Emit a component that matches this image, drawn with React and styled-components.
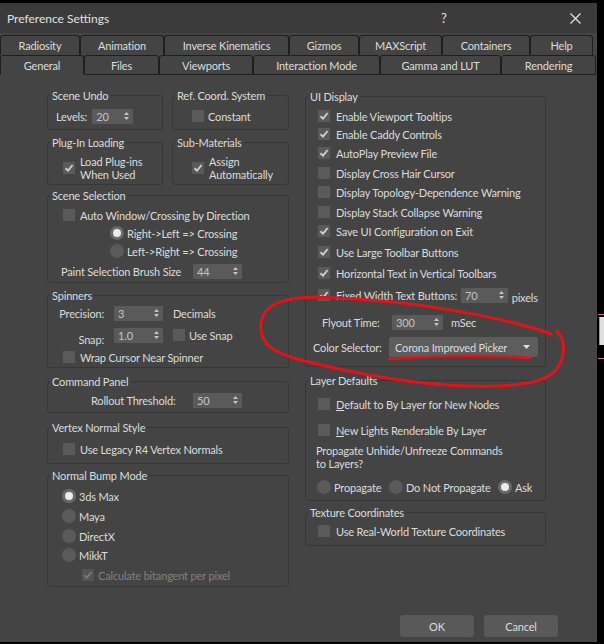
import React from 'react';
import styled, { createGlobalStyle } from 'styled-components';

const Global = createGlobalStyle`
  html, body { margin: 0; padding: 0; background: #000; }
  body {
    font-family: Lato, "Liberation Sans", "DejaVu Sans", sans-serif;
    font-size: 11px;
    letter-spacing: -0.17px;
    color: #dcdcdc;
  }
  * { box-sizing: border-box; }
`;

const Page = styled.div`
  position: relative;
  display: flex;
  width: 604px;
  height: 644px;
  padding-top: 3px;
  overflow: hidden;
  background: #000;
`;

const Dialog = styled.div`
  width: 597px;
  height: 639px;
  background: #444444;
  display: flex;
  flex-direction: column;
`;

const Side = styled.div`
  flex: 1;
  display: flex;
  flex-direction: column;
  padding-top: 311px;
`;
const SideLine = styled.div`
  height: 1px;
  margin-top: ${p => p.$mt}px;
  margin-left: 1px;
  background: #d070a0;
`;
const SideBlock = styled.div`
  height: 28px;
  margin-top: 2px;
  margin-left: 2px;
  background: #dedede;
  border-left: 1px solid #9a9a9a;
`;

const TitleBar = styled.div`
  height: 30px;
  background: #3b3b3b;
  display: flex;
  align-items: center;
  padding: 0 0 0 7px;
`;
const TitleText = styled.div`
  flex: 1;
  font-size: 12px;
  letter-spacing: 0;
  color: #e2e2e2;
`;
const Help = styled.div`
  width: 20px;
  font-size: 13px;
  color: #e2e2e2;
  margin-right: 96px;
`;
const CloseBtn = styled.div`
  width: 36px;
  height: 30px;
  display: flex;
  align-items: center;
  justify-content: center;
  margin-right: 4px;
`;

const Tabs = styled.div`
  padding-top: 2px;
  display: flex;
  flex-direction: column;
`;
const TabRow = styled.div`
  display: flex;
  height: 20px;
`;
const Tab = styled.div`
  width: ${p => p.$w}px;
  height: 20px;
  border: 1px solid #1e1e1e;
  border-bottom-color: ${p => (p.$active ? '#444' : p.$bottom ? '#1e1e1e' : 'transparent')};
  border-radius: 3px 3px 0 0;
  display: flex;
  align-items: center;
  justify-content: center;
  color: #dcdcdc;
  background: #444;
  white-space: nowrap;
`;

const Content = styled.div`
  display: flex;
  padding: 20px 0 0 47px;
  gap: 16px;
`;
const Column = styled.div`
  width: ${p => p.$w}px;
  display: flex;
  flex-direction: column;
`;
const Pair = styled.div`
  display: flex;
  gap: 9px;
`;

const Group = styled.div`
  width: ${p => (p.$w ? `${p.$w}px` : 'auto')};
  height: ${p => p.$h}px;
  margin-top: ${p => p.$mt || 0}px;
  border: 1px solid #363636;
  border-radius: 3px;
  display: flex;
  flex-direction: column;
`;
const Legend = styled.div`
  align-self: flex-start;
  margin: -7px 0 0 2px;
  padding: 0 2px;
  height: 14px;
  line-height: 14px;
  background: #444;
  white-space: nowrap;
  color: #dcdcdc;
`;

const Row = styled.div`
  display: flex;
  align-items: center;
  height: ${p => p.$h || 18}px;
  margin-top: ${p => p.$mt || 0}px;
  padding-left: ${p => p.$pl || 0}px;
  gap: ${p => (p.$gap === undefined ? 5 : p.$gap)}px;
  white-space: nowrap;
`;
const Label = styled.span`
  display: inline-block;
  width: ${p => (p.$w ? `${p.$w}px` : 'auto')};
  text-align: ${p => p.$align || 'left'};
  color: ${p => (p.$dim ? '#828282' : '#dcdcdc')};
  line-height: 13px;
  position: relative;
  top: ${p => p.$dy || 0}px;
  white-space: nowrap;
`;
const Lines = styled.div`
  line-height: 13px;
  color: #dcdcdc;
`;

const Box = styled.span`
  flex: none;
  width: 12px;
  height: 12px;
  background: ${p => (p.$dim ? '#545454' : '#5a5a5a')};
  display: inline-flex;
  align-items: center;
  justify-content: center;
`;

const RadioDot = styled.span`
  flex: none;
  width: 14px;
  height: 14px;
  border-radius: 50%;
  background: ${p => (p.$on ? '#6a6a6a' : '#5a5a5a')};
  display: inline-flex;
  align-items: center;
  justify-content: center;
  &::after {
    content: '';
    width: 8px;
    height: 8px;
    border-radius: 50%;
    background: ${p => (p.$on ? '#ececec' : 'transparent')};
  }
`;

const SpinBox = styled.span`
  flex: none;
  width: ${p => p.$w}px;
  height: 15px;
  background: #5a5a5a;
  display: inline-flex;
  align-items: center;
  justify-content: space-between;
  padding: 0 4px 0 4px;
  color: #c4c4c4;
`;

const Drop = styled.div`
  flex: none;
  width: 149px;
  height: 20px;
  background: #5d5d5d;
  border-radius: 2px;
  display: flex;
  align-items: center;
  justify-content: space-between;
  padding: 0 8px 0 6px;
  color: #dcdcdc;
`;

const Footer = styled.div`
  margin-top: auto;
  display: flex;
  justify-content: flex-end;
  gap: 10px;
  padding: 0 39px 5px 0;
`;
const Button = styled.div`
  width: 74px;
  height: 22px;
  background: #595959;
  border-radius: 3px;
  display: flex;
  align-items: center;
  justify-content: center;
  color: #dcdcdc;
`;

const Overlay = styled.svg`
  position: absolute;
  left: 0;
  top: 0;
  pointer-events: none;
`;

const Check = ({ on = false, dim = false }) => (
  <Box $dim={dim}>
    {on && (
      <svg width="10" height="10" viewBox="0 0 10 10">
        <path d="M1.5 5.2 L4 7.6 L8.6 2" fill="none" stroke={dim ? '#7a7a7a' : '#cfcfcf'} strokeWidth="1.9" />
      </svg>
    )}
  </Box>
);

const Arrows = () => (
  <svg width="5" height="8" viewBox="0 0 5 8">
    <path d="M2.5 0 L5 3 L0 3 Z M0 5 L5 5 L2.5 8 Z" fill="#c4c4c4" />
  </svg>
);

const Spinner = ({ w, value }) => (
  <SpinBox $w={w}>
    <span>{value}</span>
    <Arrows />
  </SpinBox>
);

const CheckRow = ({ on, children, mt, pl, gap = 6, dim }) => (
  <Row $mt={mt} $pl={pl} $gap={gap}>
    <Check on={on} dim={dim} />
    <Label $dim={dim}>{children}</Label>
  </Row>
);

const RadioItem = styled.span`
  display: inline-flex;
  align-items: center;
  gap: 3px;
  width: ${p => (p.$w ? `${p.$w}px` : 'auto')};
`;

const RadioRow = ({ on, children, mt, pl }) => (
  <Row $mt={mt} $pl={pl} $gap={3}>
    <RadioDot $on={on} />
    <Label>{children}</Label>
  </Row>
);

const row1 = [
  ['Radiosity', 80],
  ['Animation', 84],
  ['Inverse Kinematics', 125],
  ['Gizmos', 70],
  ['MAXScript', 83],
  ['Containers', 88],
  ['Help', 63],
];
const row2 = [
  ['General', 84],
  ['Files', 75],
  ['Viewports', 94],
  ['Interaction Mode', 127],
  ['Gamma and LUT', 121],
  ['Rendering', 95],
];

const ui = [
  ['Enable Viewport Tooltips', true, 3],
  ['Enable Caddy Controls', true, 0],
  ['AutoPlay Preview File', true, 1],
  ['Display Cross Hair Cursor', false, 2],
  ['Display Topology-Dependence Warning', false, 1],
  ['Display Stack Collapse Warning', false, 2],
  ['Save UI Configuration on Exit', true, 1],
  ['Use Large Toolbar Buttons', true, 3],
  ['Horizontal Text in Vertical Toolbars', true, 3],
];

export default function App() {
  return (
    <Page>
      <Global />
      <Dialog>
        <TitleBar>
          <TitleText>Preference Settings</TitleText>
          <Help>?</Help>
          <CloseBtn>
            <svg width="11" height="11" viewBox="0 0 11 11">
              <path d="M0.5 0.5 L10.5 10.5 M10.5 0.5 L0.5 10.5" stroke="#e0e0e0" strokeWidth="1.3" />
            </svg>
          </CloseBtn>
        </TitleBar>

        <Tabs>
          <TabRow>
            {row1.map(([t, w]) => (
              <Tab key={t} $w={w}>{t}</Tab>
            ))}
          </TabRow>
          <TabRow>
            {row2.map(([t, w], i) => (
              <Tab key={t} $w={w} $active={i === 0} $bottom>{t}</Tab>
            ))}
          </TabRow>
        </Tabs>

        <Content>
          <Column $w={242}>
            <Pair>
              <Group $w={116} $h={35}>
                <Legend>Scene Undo</Legend>
                <Row $mt={4} $pl={8} $gap={5}>
                  <Label>Levels:</Label>
                  <Spinner w={41} value="20" />
                </Row>
              </Group>
              <Group $w={117} $h={35}>
                <Legend>Ref. Coord. System</Legend>
                <CheckRow mt={4} pl={19} gap={4}>Constant</CheckRow>
              </Group>
            </Pair>
            <Pair>
              <Group $w={116} $h={43} $mt={12}>
                <Legend>Plug-In Loading</Legend>
                <Row $mt={5} $pl={15} $gap={5} $h={26}>
                  <Check on />
                  <Lines>Load Plug-ins<br />When Used</Lines>
                </Row>
              </Group>
              <Group $w={117} $h={43} $mt={12}>
                <Legend>Sub-Materials</Legend>
                <Row $mt={5} $pl={19} $gap={5} $h={26}>
                  <Check on />
                  <Lines>Assign<br />Automatically</Lines>
                </Row>
              </Group>
            </Pair>
            <Group $h={88} $mt={10}>
              <Legend>Scene Selection</Legend>
              <CheckRow mt={3} pl={15} gap={5}>Auto Window/Crossing by Direction</CheckRow>
              <RadioRow on pl={62}>Right-&gt;Left =&gt; Crossing</RadioRow>
              <RadioRow pl={62}>Left-&gt;Right =&gt; Crossing</RadioRow>
              <Row $mt={2} $pl={13} $gap={0}>
                <Label $w={132}>Paint Selection Brush Size</Label>
                <Spinner w={49} value="44" />
              </Row>
            </Group>
            <Group $h={73} $mt={12}>
              <Legend>Spinners</Legend>
              <Row $mt={1} $pl={11} $gap={10}>
                <Label $w={45} $align="right">Precision:</Label>
                <Spinner w={49} value="3" />
                <Label $dy={0}>Decimals</Label>
              </Row>
              <Row $mt={4} $pl={11} $gap={10}>
                <Label $w={45} $align="right" $dy={4}>Snap:</Label>
                <Spinner w={49} value="1.0" />
                <Row $gap={4}>
                  <Check />
                  <Label>Use Snap</Label>
                </Row>
              </Row>
              <CheckRow mt={4} pl={15} gap={5}>Wrap Cursor Near Spinner</CheckRow>
            </Group>
            <Group $h={32} $mt={13}>
              <Legend>Command Panel</Legend>
              <Row $mt={2} $pl={43} $gap={0}>
                <Label $w={102}>Rollout Threshold:</Label>
                <Spinner w={49} value="50" />
              </Row>
            </Group>
            <Group $h={37} $mt={14}>
              <Legend>Vertex Normal Style</Legend>
              <CheckRow mt={5} pl={15} gap={5}>Use Legacy R4 Vertex Normals</CheckRow>
            </Group>
            <Group $h={112} $mt={11}>
              <Legend>Normal Bump Mode</Legend>
              <RadioRow on mt={4} pl={14}>3ds Max</RadioRow>
              <RadioRow mt={2} pl={14}>Maya</RadioRow>
              <RadioRow mt={2} pl={14}>DirectX</RadioRow>
              <RadioRow mt={1} pl={14}>MikkT</RadioRow>
              <CheckRow on dim mt={2} pl={34} gap={4}>Calculate bitangent per pixel</CheckRow>
            </Group>
          </Column>

          <Column $w={241}>
            <Group $h={271} $mt={1}>
              <Legend>UI Display</Legend>
              {ui.map(([t, on, mt]) => (
                <CheckRow key={t} on={on} mt={mt} pl={12}>{t}</CheckRow>
              ))}
              <Row $mt={4} $pl={12} $gap={6}>
                <Check on />
                <Row $gap={1}>
                  <Label $w={124}>Fixed Width Text Buttons:</Label>
                  <Spinner w={47} value="70" />
                  <Label $dy={2}>&nbsp;pixels</Label>
                </Row>
              </Row>
              <Row $mt={9} $pl={16} $gap={0}>
                <Label $w={70}>Flyout Time:</Label>
                <Spinner w={51} value="300" />
                <Label>&nbsp;&nbsp;&nbsp;mSec</Label>
              </Row>
              <Row $mt={6} $pl={7} $gap={0} $h={20}>
                <Label $w={76}>Color Selector:</Label>
                <Drop>
                  <span>Corona Improved Picker</span>
                  <svg width="7" height="4" viewBox="0 0 7 4">
                    <path d="M0 0 L7 0 L3.5 4 Z" fill="#e0e0e0" />
                  </svg>
                </Drop>
              </Row>
            </Group>
            <Group $h={121} $mt={13}>
              <Legend>Layer Defaults</Legend>
              <CheckRow mt={7} pl={12}><u>D</u>efault to By Layer for New Nodes</CheckRow>
              <CheckRow mt={8} pl={12}><u>N</u>ew Lights Renderable By Layer</CheckRow>
              <Row $mt={5} $pl={10} $h={26}>
                <Lines>Propagate Unhide/Unfreeze Commands<br />to Layers?</Lines>
              </Row>
              <Row $mt={8} $pl={11} $gap={0}>
                <RadioItem $w={72}>
                  <RadioDot />
                  <Label>Propagate</Label>
                </RadioItem>
                <RadioItem $w={109}>
                  <RadioDot />
                  <Label>Do Not Propagate</Label>
                </RadioItem>
                <RadioItem>
                  <RadioDot $on />
                  <Label>Ask</Label>
                </RadioItem>
              </Row>
            </Group>
            <Group $h={34} $mt={11}>
              <Legend>Texture Coordinates</Legend>
              <CheckRow mt={2} pl={12}>Use Real-World Texture Coordinates</CheckRow>
            </Group>
          </Column>
        </Content>

        <Footer>
          <Button>OK</Button>
          <Button>Cancel</Button>
        </Footer>
      </Dialog>
      <Side>
        <SideLine $mt={0} />
        <SideBlock />
        <SideLine $mt={13} />
      </Side>

      <Overlay width="604" height="644" viewBox="0 0 604 644">
        <path
          d="M551 334 C520 322, 440 305, 370 300 C330 297, 295 294, 275 304 C258 313, 257 333, 268 345 C280 356, 300 360, 330 367 C370 376, 420 385, 470 386 C510 387, 545 384, 556 370 C566 357, 566 340, 557 331"
          fill="none"
          stroke="#e0141a"
          strokeWidth="3"
          strokeLinecap="round"
        />
        <path
          d="M389 359 C430 356, 480 354, 530 358"
          fill="none"
          stroke="#e0141a"
          strokeWidth="2.6"
          strokeLinecap="round"
        />
      </Overlay>
    </Page>
  );
}
